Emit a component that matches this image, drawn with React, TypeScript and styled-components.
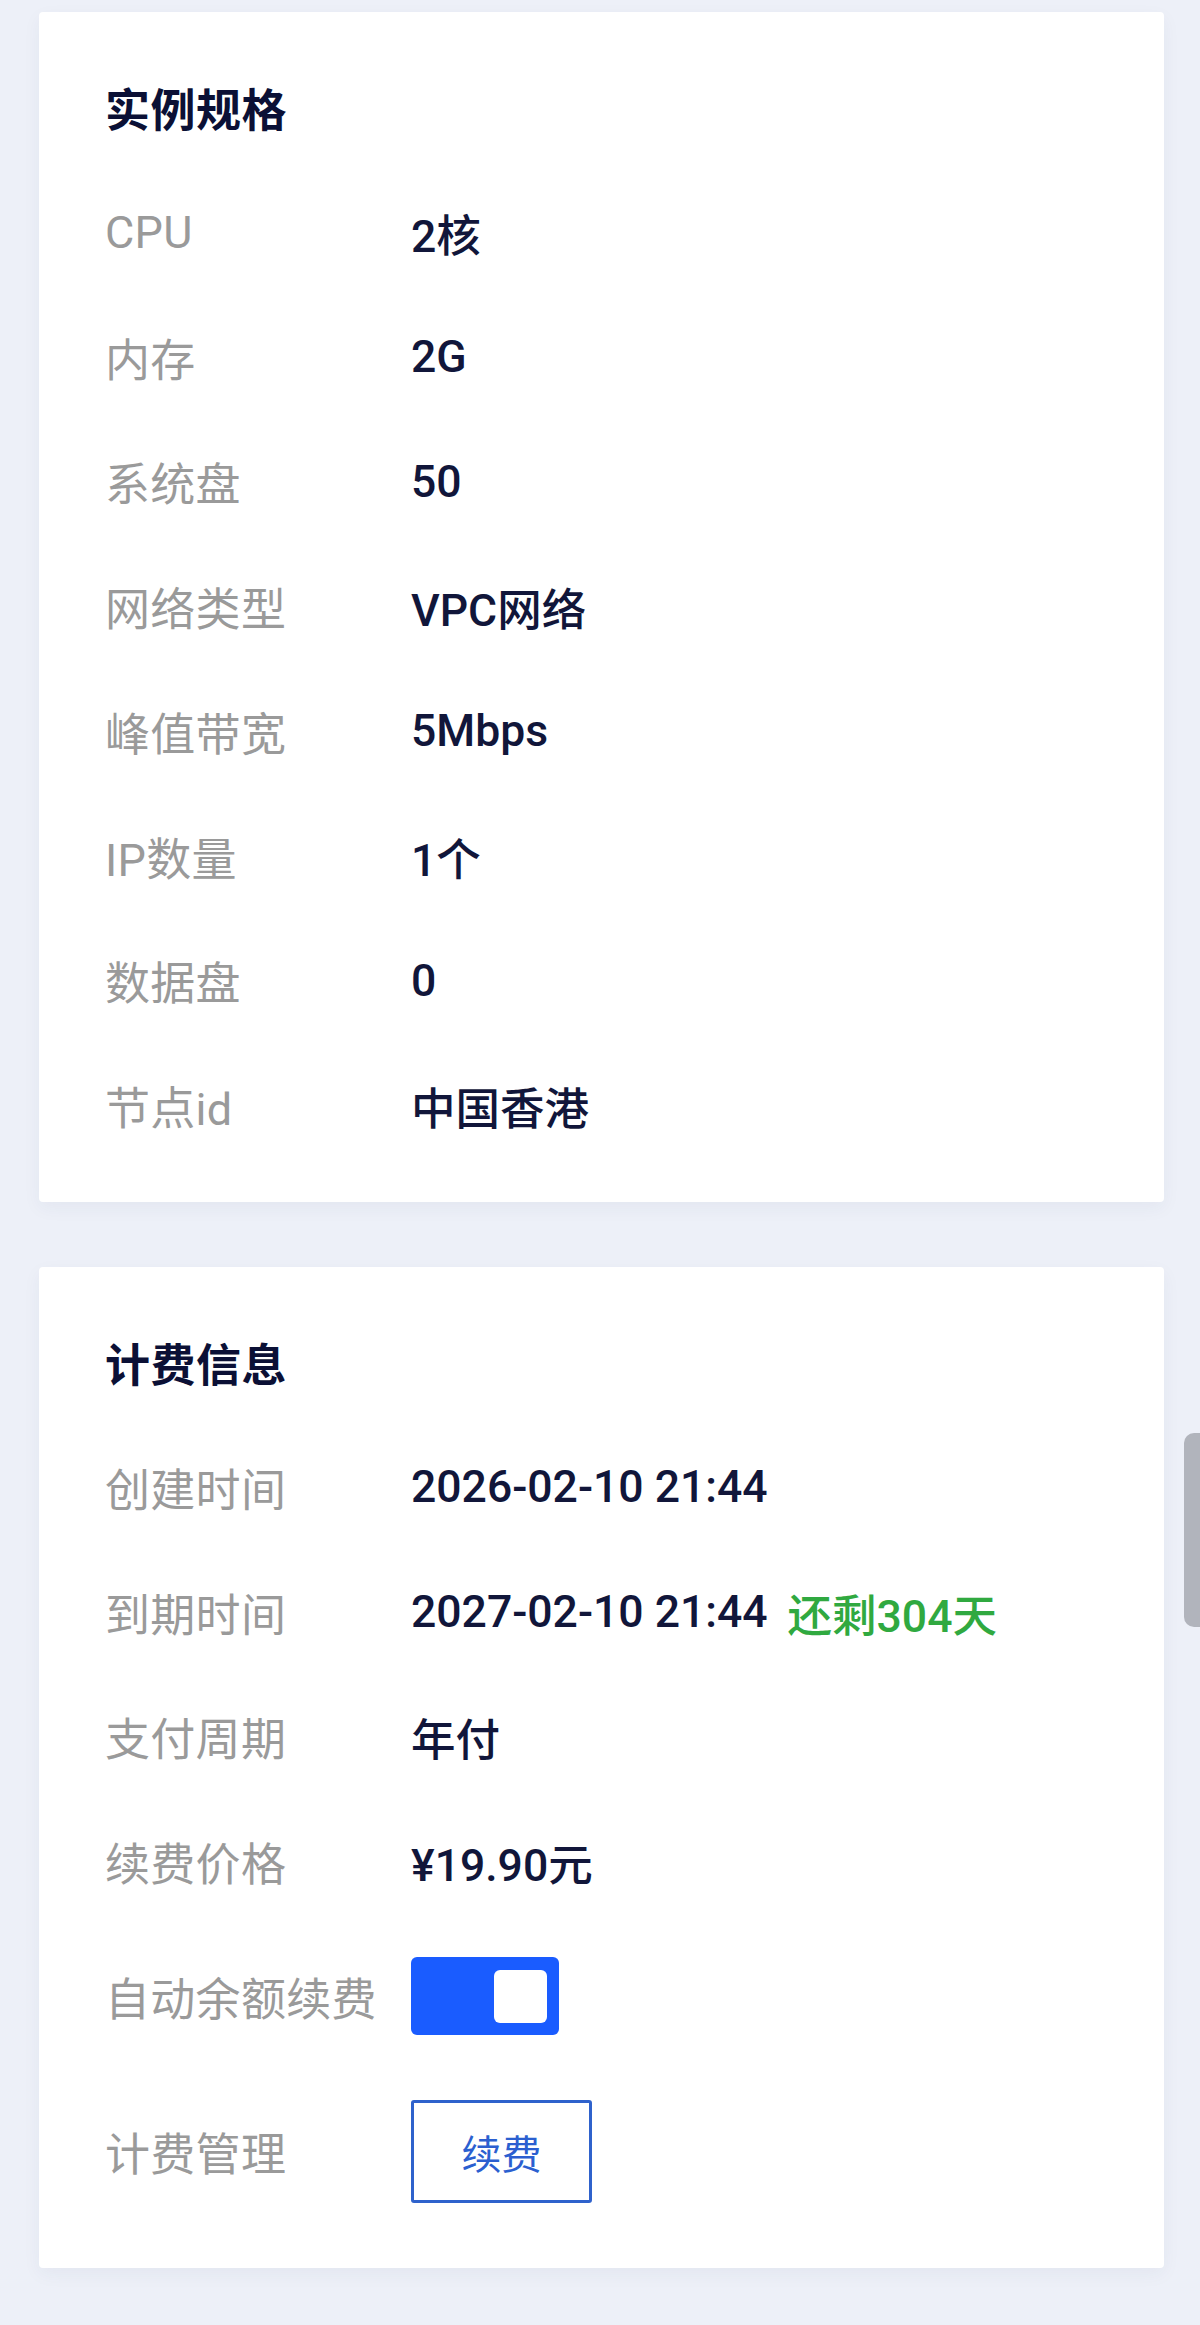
import React from "react";
import styled, { createGlobalStyle } from "styled-components";

const GlobalStyle = createGlobalStyle`
  html, body {
    margin: 0;
    padding: 0;
    background: #edf0f8;
  }
  body {
    font-family: Roboto, "Noto Sans CJK SC", "Noto Sans", sans-serif;
    -webkit-font-smoothing: antialiased;
  }
`;

const Page = styled.div`
  min-height: 2325px;
  box-sizing: border-box;
  padding: 12px 36px 40px 39px;
  display: flex;
  flex-direction: column;
  gap: 65px;
  background: #edf0f8;
`;

const Card = styled.section`
  background: #ffffff;
  border-radius: 4px;
  box-shadow: 0 6px 18px rgba(40, 50, 90, 0.05);
  padding: 40px 66px 34px;
  display: flex;
  flex-direction: column;
`;

const Title = styled.h2`
  margin: 0 0 8px;
  height: 110px;
  display: flex;
  align-items: center;
  font-size: 45px;
  font-weight: 700;
  color: #0b1035;
  letter-spacing: 0.5px;
`;

const Row = styled.div<{ $h?: number; $pt?: number; $pb?: number }>`
  display: flex;
  align-items: center;
  min-height: ${(p) => p.$h ?? 124.75}px;
  padding-top: ${(p) => p.$pt ?? 0}px;
  padding-bottom: ${(p) => p.$pb ?? 0}px;
  box-sizing: border-box;
`;

const Label = styled.div`
  width: 306px;
  flex-shrink: 0;
  font-size: 45px;
  color: #9a9a9a;
  letter-spacing: 0.3px;
`;

const Value = styled.div`
  font-size: 44.5px;
  color: #11163a;
  font-weight: 500;
  letter-spacing: 0px;
  display: flex;
  align-items: center;
  gap: 20px;
`;

const Remain = styled.span`
  color: #30a940;
  font-weight: 500;
`;

const Toggle = styled.div<{ $on: boolean }>`
  width: 148px;
  height: 78px;
  border-radius: 6px;
  background: ${(p) => (p.$on ? "#1a5cff" : "#d0d4de")};
  display: flex;
  align-items: center;
  justify-content: ${(p) => (p.$on ? "flex-end" : "flex-start")};
  padding: 0 12px;
  box-sizing: border-box;
`;

const Knob = styled.div`
  width: 53px;
  height: 53px;
  border-radius: 6px;
  background: #ffffff;
`;

const OutlineButton = styled.button`
  width: 181px;
  height: 103px;
  box-sizing: border-box;
  border: 3px solid #2f62cc;
  border-radius: 3px;
  background: #ffffff;
  color: #2b5fd0;
  font-family: Roboto, "Noto Sans CJK SC", sans-serif;
  font-size: 40px;
  cursor: pointer;
  padding: 0;
`;

const ScrollThumb = styled.div`
  position: absolute;
  left: 1184px;
  top: 1433px;
  width: 16px;
  height: 194px;
  background: #b1b4bc;
  border-radius: 10px 0 0 10px;
`;

const Wrap = styled.div`
  position: relative;
`;

const specs: [string, string][] = [
  ["CPU", "2核"],
  ["内存", "2G"],
  ["系统盘", "50"],
  ["网络类型", "VPC网络"],
  ["峰值带宽", "5Mbps"],
  ["IP数量", "1个"],
  ["数据盘", "0"],
  ["节点id", "中国香港"],
];

export default function App() {
  return (
    <Wrap>
      <GlobalStyle />
      <Page>
        <Card>
          <Title>实例规格</Title>
          {specs.map(([k, v]) => (
            <Row key={k}>
              <Label>{k}</Label>
              <Value>{v}</Value>
            </Row>
          ))}
        </Card>
        <Card>
          <Title>计费信息</Title>
          <Row>
            <Label>创建时间</Label>
            <Value>2026-02-10 21:44</Value>
          </Row>
          <Row>
            <Label>到期时间</Label>
            <Value>
              <span>2027-02-10 21:44</span>
              <Remain>还剩304天</Remain>
            </Value>
          </Row>
          <Row>
            <Label>支付周期</Label>
            <Value>年付</Value>
          </Row>
          <Row>
            <Label>续费价格</Label>
            <Value>¥19.90元</Value>
          </Row>
          <Row $h={144}>
            <Label>自动余额续费</Label>
            <Toggle $on>
              <Knob />
            </Toggle>
          </Row>
          <Row $h={0} $pt={32} $pb={31}>
            <Label>计费管理</Label>
            <OutlineButton>续费</OutlineButton>
          </Row>
        </Card>
      </Page>
      <ScrollThumb />
    </Wrap>
  );
}
